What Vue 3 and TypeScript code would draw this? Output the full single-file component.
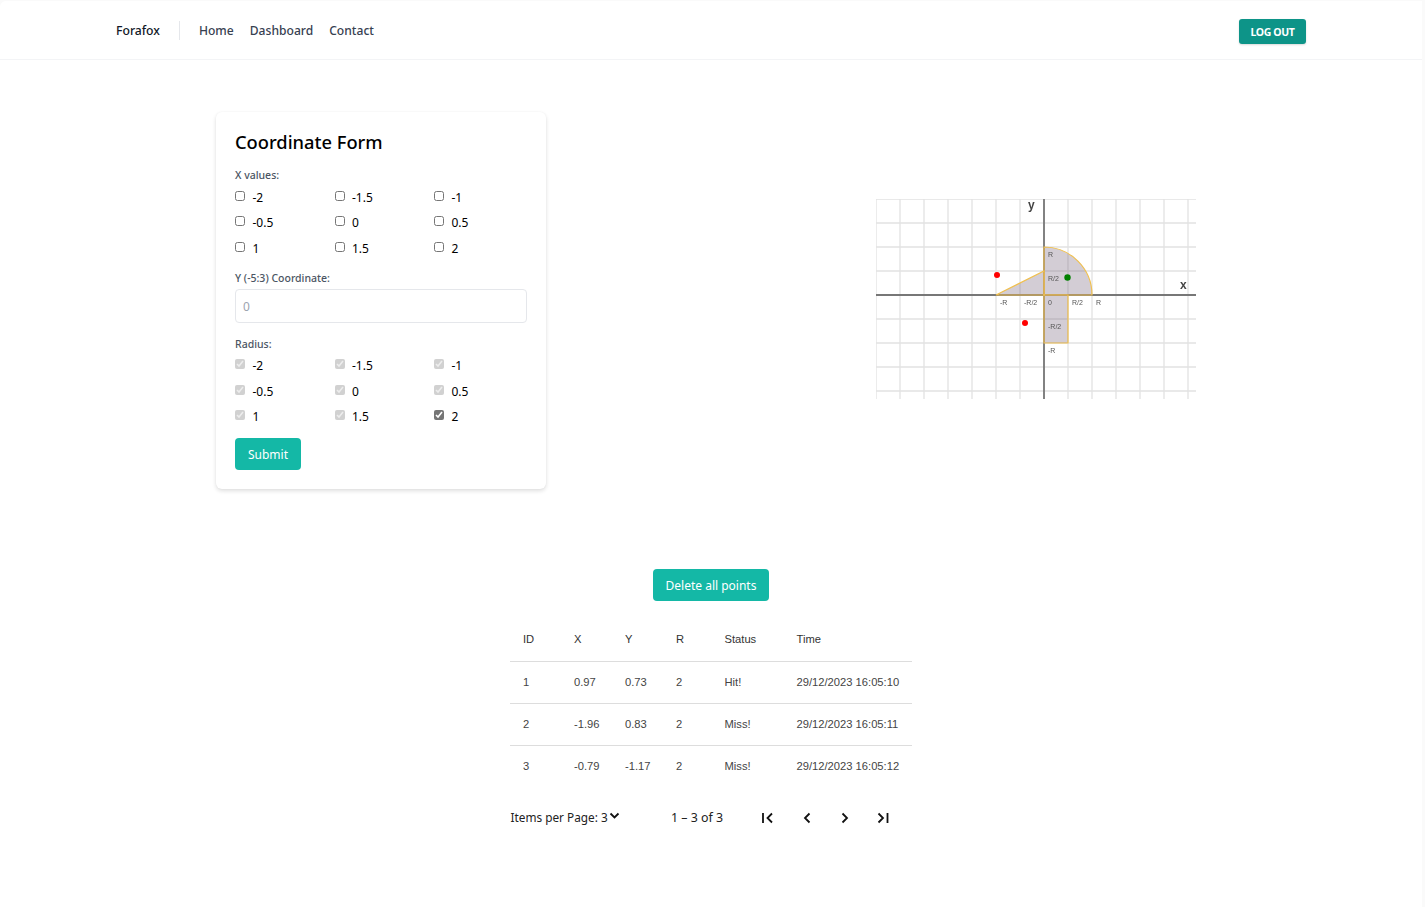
<template>
  <div class="page">
    <header class="navbar">
      <span class="brand">Forafox</span>
      <nav class="links">
        <a v-for="link in links" :key="link">{{ link }}</a>
      </nav>
      <button class="logout">LOG OUT</button>
    </header>

    <main>
      <section class="top-row">
        <form class="card" @submit.prevent>
          <h2>Coordinate Form</h2>

          <div class="label first">X values:</div>
          <div class="options">
            <label v-for="v in values" :key="v" class="option">
              <input type="checkbox" />
              <span>{{ v }}</span>
            </label>
          </div>

          <div class="label y-label">Y (-5:3) Coordinate:</div>
          <input class="y-input" type="text" placeholder="0" />

          <div class="label r-label">Radius:</div>
          <div class="options">
            <label v-for="v in values" :key="v" class="option">
              <input type="checkbox" checked :disabled="v !== '2'" />
              <span>{{ v }}</span>
            </label>
          </div>

          <button class="teal submit" type="submit">Submit</button>
        </form>

        <svg class="graph" width="320" height="200" viewBox="0 0 320 200">
          <g class="grid">
            <line v-for="x in gridX" :key="'v' + x" :x1="x" y1="0" :x2="x" y2="200" />
            <line v-for="y in gridY" :key="'h' + y" x1="0" :y1="y" x2="320" :y2="y" />
          </g>
          <line class="axis" x1="168" y1="0" x2="168" y2="200" />
          <line class="axis" x1="0" y1="96" x2="320" y2="96" />
          <path class="area" d="M168 96 L168 48 A48 48 0 0 1 216 96 Z" />
          <path class="area" d="M120 96 L168 72 L168 96 Z" />
          <path class="area" d="M168 96 H192 V144 H168 Z" />
          <text class="axis-name" x="152" y="10">y</text>
          <text class="axis-name" x="304" y="90">x</text>
          <text x="172" y="58">R</text>
          <text x="172" y="82">R/2</text>
          <text x="124" y="106">-R</text>
          <text x="148" y="106">-R/2</text>
          <text x="172" y="106">0</text>
          <text x="196" y="106">R/2</text>
          <text x="220" y="106">R</text>
          <text x="172" y="130">-R/2</text>
          <text x="172" y="154">-R</text>
          <circle v-for="p in points" :key="p.x" :cx="p.x" :cy="p.y" :r="p.r" :fill="p.color" />
        </svg>
      </section>

      <section class="results">
        <button class="teal delete">Delete all points</button>
        <table>
          <thead>
            <tr>
              <th class="c-id">ID</th>
              <th class="c-num">X</th>
              <th class="c-num">Y</th>
              <th class="c-r">R</th>
              <th class="c-status">Status</th>
              <th>Time</th>
            </tr>
          </thead>
          <tbody>
            <tr v-for="row in rows" :key="row.id">
              <td>{{ row.id }}</td>
              <td>{{ row.x }}</td>
              <td>{{ row.y }}</td>
              <td>{{ row.r }}</td>
              <td>{{ row.status }}</td>
              <td>{{ row.time }}</td>
            </tr>
          </tbody>
        </table>

        <div class="pager">
          <div class="per-page">
            <span>Items per Page: 3</span>
            <svg width="11" height="8" viewBox="0 0 11 8"><path d="M1.5 1.5 L5.5 5.5 L9.5 1.5" /></svg>
          </div>
          <span class="range">1 – 3 of 3</span>
          <div class="pager-buttons">
            <svg width="14" height="12" viewBox="0 0 14 12"><path d="M2 1 V11 M11 1.5 L6.5 6 L11 10.5" /></svg>
            <svg width="14" height="12" viewBox="0 0 14 12"><path d="M9.5 1.5 L5 6 L9.5 10.5" /></svg>
            <svg width="14" height="12" viewBox="0 0 14 12"><path d="M4.5 1.5 L9 6 L4.5 10.5" /></svg>
            <svg width="14" height="12" viewBox="0 0 14 12"><path d="M1.5 1.5 L6 6 L1.5 10.5 M10.5 1 V11" /></svg>
          </div>
        </div>
      </section>
    </main>
  </div>
</template>

<script setup lang="ts">
interface Row {
  id: number
  x: number
  y: number
  r: number
  status: string
  time: string
}

const links = ['Home', 'Dashboard', 'Contact']
const values = ['-2', '-1.5', '-1', '-0.5', '0', '0.5', '1', '1.5', '2']

const gridX = Array.from({ length: 14 }, (_, i) => i * 24)
const gridY = Array.from({ length: 9 }, (_, i) => i * 24)

const points = [
  { x: 121, y: 76, r: 3, color: '#f00' },
  { x: 149, y: 124, r: 3, color: '#f00' },
  { x: 191.5, y: 78.5, r: 3.2, color: '#008000' },
]

const rows: Row[] = [
  { id: 1, x: 0.97, y: 0.73, r: 2, status: 'Hit!', time: '29/12/2023 16:05:10' },
  { id: 2, x: -1.96, y: 0.83, r: 2, status: 'Miss!', time: '29/12/2023 16:05:11' },
  { id: 3, x: -0.79, y: -1.17, r: 2, status: 'Miss!', time: '29/12/2023 16:05:12' },
]
</script>

<style>
html,
body {
  background: #fafafa;
}
</style>

<style scoped>
.page {
  width: 1422px;
  height: 906px;
  margin-top: 1px;
  border-top-left-radius: 6px;
  font-family: "Noto Sans", "Open Sans", sans-serif;
  color: #000;
  background: #fff;
}

.navbar {
  display: flex;
  align-items: center;
  height: 59px;
  box-sizing: border-box;
  padding: 0 116px;
  border-bottom: 1px solid #f3f4f6;
}

.brand {
  font-size: 12.2px;
  font-weight: 500;
  color: #111827;
  padding-right: 19px;
  line-height: 19px;
  border-right: 1px solid #e5e7eb;
}

.links {
  display: flex;
  gap: 16px;
  margin-left: 19px;
  flex: 1;
}

.links a {
  font-size: 12.1px;
  font-weight: 500;
  color: #374151;
}

.logout {
  width: 67px;
  height: 25px;
  margin-top: 3px;
  padding: 0;
  border: none;
  border-radius: 3px;
  background: #0d9488;
  color: #fff;
  font-family: inherit;
  font-size: 10.5px;
  font-weight: 700;
  letter-spacing: -0.4px;
  box-shadow: 0 1px 2px rgba(0, 0, 0, 0.15);
}

.top-row {
  display: flex;
  justify-content: space-between;
  align-items: flex-start;
  padding: 52px 226px 0 216px;
}

.card {
  width: 330px;
  height: 377px;
  box-sizing: border-box;
  padding: 19px 19px;
  border-radius: 6px;
  background: #fff;
  box-shadow: 0 2px 4px rgba(0, 0, 0, 0.13), 0 0 2px rgba(0, 0, 0, 0.04);
}

h2 {
  margin: 0;
  font-size: 18.3px;
  line-height: 22px;
  font-weight: 500;
}

.label {
  font-size: 10.5px;
  line-height: 14px;
  font-weight: 500;
  color: #4b5563;
}

.label.first {
  margin-top: 15px;
}

.label.y-label {
  margin-top: 10px;
}

.label.r-label {
  margin-top: 14px;
}

.options {
  display: grid;
  grid-template-columns: 99.5px 99.5px 1fr;
  margin-top: 2px;
}

.option {
  display: flex;
  align-items: center;
  height: 25.5px;
  box-sizing: border-box;
  padding-top: 1px;
  font-size: 12px;
}

.option input {
  width: 10px;
  height: 10px;
  margin: 0 7.5px 3px 0;
  accent-color: #757575;
}

.y-input {
  display: block;
  width: 292px;
  height: 34px;
  box-sizing: border-box;
  margin-top: 4px;
  padding: 1px 7px 0;
  border: 1px solid #e5e7eb;
  border-radius: 4px;
  font-family: inherit;
  font-size: 12px;
}

.y-input::placeholder {
  color: #9ca3af;
}

.teal {
  border: none;
  border-radius: 4px;
  background: #14b8a6;
  color: #fff;
  font-family: inherit;
  font-size: 12px;
  height: 32px;
  padding: 0;
}

.submit {
  display: block;
  width: 66px;
  margin-top: 9px;
}

.graph {
  display: block;
  margin-top: 87px;
  filter: blur(0.3px);
}

.grid line {
  stroke: #e2e2e2;
  stroke-width: 1.3;
}

.axis {
  stroke: #777;
  stroke-width: 1.8;
}

.area {
  fill: rgba(110, 90, 115, 0.3);
  stroke: #f0c050;
  stroke-width: 1.2;
}

.graph text {
  font-family: "Liberation Sans", Arial, sans-serif;
  font-size: 7px;
  fill: #555;
}

.graph .axis-name {
  font-size: 12px;
  font-weight: 700;
  fill: #444;
}

.results {
  display: flex;
  flex-direction: column;
  align-items: center;
  margin-top: 80px;
}

.delete {
  width: 116px;
}

table {
  width: 402px;
  margin-top: 17px;
  border-collapse: collapse;
  table-layout: fixed;
  font-family: "Liberation Sans", Arial, sans-serif;
  font-size: 11.2px;
  color: #333;
}

th,
td {
  box-sizing: border-box;
  padding: 0 0 0 13px;
  text-align: left;
  font-weight: 400;
  white-space: nowrap;
}

th {
  height: 43px;
}

td {
  height: 42px;
  color: #444;
}

tr {
  border-bottom: 1px solid #ddd;
}

tbody tr:last-child {
  border-bottom: none;
}

.c-id,
.c-num {
  width: 51px;
}

.c-r {
  width: 48.5px;
}

.c-status {
  width: 72px;
}

.pager {
  display: flex;
  align-items: center;
  width: 402px;
  height: 30px;
  margin-top: 15px;
  font-size: 12px;
  color: #222;
}

.per-page {
  display: flex;
  align-items: center;
  gap: 1px;
  width: 161px;
  padding-left: 0.5px;
  box-sizing: border-box;
  font-size: 11.8px;
  line-height: 28px;
}

.per-page svg {
  margin-top: -3px;
}

.per-page path,
.pager-buttons path {
  fill: none;
  stroke: #111;
  stroke-width: 1.8;
}

.range {
  width: 84px;
  font-size: 12.4px;
}

.pager-buttons {
  display: flex;
  gap: 24.5px;
  margin-left: 6px;
  margin-top: 2px;
}
</style>
